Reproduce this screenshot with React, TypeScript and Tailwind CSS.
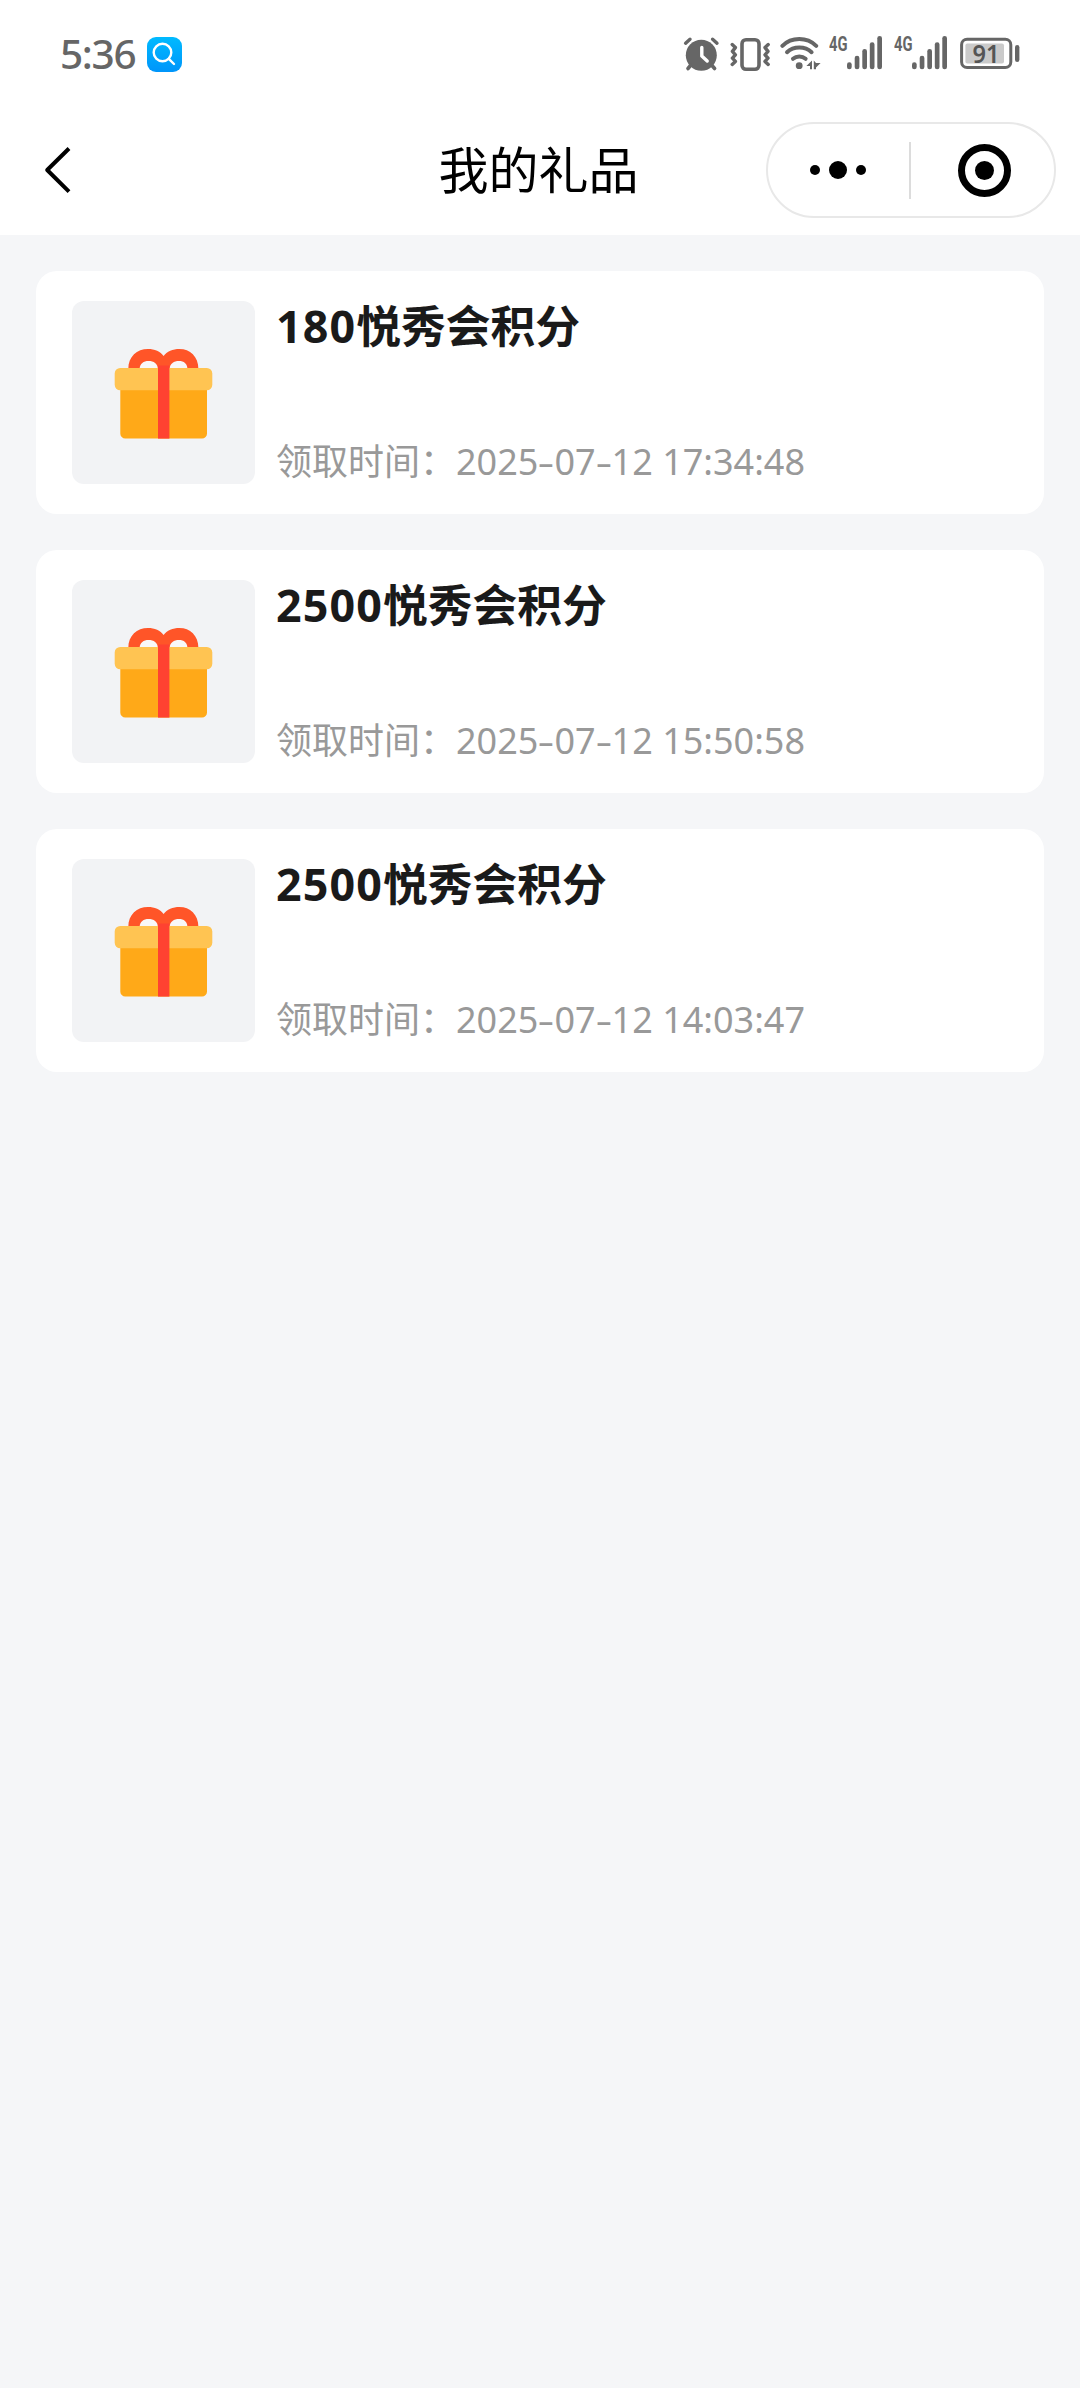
import type { ReactNode } from 'react'

const gifts = [
  { id: 1, points: '180', date: '2025-07-12', time: '17:34:48' },
  { id: 2, points: '2500', date: '2025-07-12', time: '15:50:58' },
  { id: 3, points: '2500', date: '2025-07-12', time: '14:03:47' },
]

const GRAY = '#666666'

function AlarmIcon() {
  return (
    <svg width="37" height="36" viewBox="0 0 37 36" fill="none" className="shrink-0">
      <circle cx="18.3" cy="19.3" r="15.5" fill={GRAY} />
      <path d="M2.6 7.2 L7 3.2 M34 7.2 L29.6 3.2" stroke={GRAY} strokeWidth="3.4" strokeLinecap="round" />
      <path d="M7.5 29.5 L5 32.5 M29 29.5 L31.6 32.5" stroke={GRAY} strokeWidth="3.6" strokeLinecap="round" />
      <path d="M18.8 11.5 V20 L24.2 25" stroke="#fff" strokeWidth="3.4" strokeLinecap="round" strokeLinejoin="round" />
    </svg>
  )
}

function VibrateIcon() {
  return (
    <svg width="40" height="36" viewBox="0 0 40 36" fill="none" className="shrink-0">
      <rect x="12" y="3.7" width="17" height="29.6" rx="4" stroke={GRAY} strokeWidth="3.6" />
      <path d="M2.2 8.6 L5.4 11.6 L2.4 15.4 L5.4 18.8 L2.4 22.2 L5.4 25.4 L2.2 28.4" stroke={GRAY} strokeWidth="3.4" strokeLinecap="round" strokeLinejoin="round" />
      <path d="M38.2 8.6 L35 11.6 L38 15.4 L35 18.8 L38 22.2 L35 25.4 L38.2 28.4" stroke={GRAY} strokeWidth="3.4" strokeLinecap="round" strokeLinejoin="round" />
    </svg>
  )
}

function WifiIcon() {
  return (
    <svg width="41" height="36" viewBox="0 0 41 36" fill="none" className="shrink-0">
      <path d="M2.4 9.8 C11.5 0.7 27 0.7 36.2 9.8" stroke={GRAY} strokeWidth="4" strokeLinecap="round" />
      <path d="M7 16.2 C13.6 9.9 25 9.9 31.6 16.2" stroke={GRAY} strokeWidth="4" strokeLinecap="round" />
      <path d="M13 22.8 C16.6 19.6 22 19.6 25.6 22.8" stroke={GRAY} strokeWidth="4" strokeLinecap="round" />
      <circle cx="19.2" cy="29.7" r="3.4" fill={GRAY} />
      <path d="M32 24.6 V33.2 H30 V30 H26.4 Z" fill={GRAY} />
      <path d="M33.8 24.6 L36 27 H40.6 L36 31.4 V33.2 H33.8 Z" fill={GRAY} />
    </svg>
  )
}

function SignalIcon() {
  return (
    <svg width="54" height="48" viewBox="0 -6 54 48" className="shrink-0">
      <text x="0" y="15" fontFamily="Roboto" fontWeight="700" fontSize="20" fill={GRAY} textLength="18.5" lengthAdjust="spacingAndGlyphs">4G</text>
      <rect x="18" y="26.3" width="4.7" height="7" rx="2.3" fill={GRAY} />
      <rect x="25.7" y="19.7" width="4.7" height="13.6" rx="2.3" fill={GRAY} />
      <rect x="33.3" y="13" width="4.7" height="20.3" rx="2.3" fill={GRAY} />
      <rect x="40.8" y="6.2" width="4.7" height="27.1" rx="2.3" fill={GRAY} />
      <rect x="48.3" y="0" width="4.7" height="33.3" rx="2.3" fill={GRAY} />
    </svg>
  )
}

function BatteryIcon() {
  return (
    <svg width="60" height="36" viewBox="0 0 60 36" fill="none" className="shrink-0">
      <rect x="1.6" y="3.3" width="49.2" height="28.2" rx="5.5" stroke={GRAY} strokeWidth="3" />
      <rect x="5.4" y="7.4" width="38.6" height="20" rx="2" fill="#cacaca" />
      <rect x="55" y="9" width="4.4" height="17" rx="2.2" fill={GRAY} />
      <text x="26" y="27" textAnchor="middle" fontFamily="Noto Sans" fontWeight="600" fontSize="26" fill="#555" textLength="27" lengthAdjust="spacingAndGlyphs">91</text>
    </svg>
  )
}

function SearchBadge() {
  return (
    <span className="flex h-[35px] w-[35px] rounded-[9px] bg-linear-to-b from-[#00baff] to-[#0095fa]">
      <svg width="35" height="35" viewBox="0 0 35 35" fill="none" stroke="#fff" strokeWidth="2.4" strokeLinecap="round">
        <circle cx="15.5" cy="15.5" r="8.8" />
        <path d="M21.8 21.8 L27 27" />
      </svg>
    </span>
  )
}

function GiftIcon() {
  return (
    <svg width="183" height="183" viewBox="0 0 183 183">
      <path d="M56.3 68 C56.3 55.5 65 48 76 48 C82.5 48 88.5 50.5 91.6 55 C94.7 50.5 101 48 107.4 48 C118 48 126.4 55.5 126.4 68 Z" fill="#ff5528" />
      <path d="M67.6 67.5 C68 62.5 71.5 60 76.5 60 C82 60 85.4 62.5 85.8 67.5 Z" fill="#f8f8f8" />
      <path d="M97.6 67.5 C98 62.5 101.8 60 107 60 C112 60 115 62.5 115.4 67.5 Z" fill="#f8f8f8" />
      <path d="M48.3 84 H135 V132.5 A5 5 0 0 1 130 137.6 H53.3 A5 5 0 0 1 48.3 132.5 Z" fill="#ffa918" />
      <rect x="42.7" y="67" width="97.6" height="22.3" rx="5.5" fill="#ffc452" />
      <rect x="86" y="64.5" width="11.4" height="73.1" fill="#ff4231" />
    </svg>
  )
}

function StatusBar() {
  return (
    <div className="flex h-[106px] items-center justify-between pt-0.5 pr-[60px] pl-[60px]">
      <div className="flex items-center">
        <span className="w-[87px] font-['Noto_Sans'] text-[40.5px] leading-none font-medium tracking-[-1.3px] text-[#666]">5:36</span>
        <SearchBadge />
      </div>
      <div className="flex items-center">
        <AlarmIcon />
        <span className="ml-[10px] flex"><VibrateIcon /></span>
        <span className="ml-[10px] flex"><WifiIcon /></span>
        <span className="ml-[8px] flex"><SignalIcon /></span>
        <span className="ml-[11px] flex"><SignalIcon /></span>
        <span className="ml-[12px] flex"><BatteryIcon /></span>
      </div>
    </div>
  )
}

function NavBar() {
  return (
    <div className="grid h-[129px] grid-cols-3 items-center pr-6 pb-px pl-[42px]">
      <svg width="30" height="50" viewBox="0 0 30 50" fill="none" stroke="#000" strokeWidth="4" strokeLinejoin="round">
        <path d="M27 3.5 L5.2 25 L27 46.7" />
      </svg>
      <h1 className="-ml-[21px] text-center text-[50px] leading-none font-normal whitespace-nowrap text-black">我的礼品</h1>
      <div className="flex h-24 w-[290px] items-center justify-self-end rounded-full border-2 border-[#e8e8e8]">
        <div className="flex flex-1 items-center justify-center gap-[9px] pr-[2px]">
          <span className="size-[10px] rounded-full bg-black" />
          <span className="size-[18px] rounded-full bg-black" />
          <span className="size-[10px] rounded-full bg-black" />
        </div>
        <div className="h-[57px] w-[2px] bg-[#dcdcdc]" />
        <div className="flex flex-1 items-center justify-center pl-1">
          <span className="flex size-[53px] items-center justify-center rounded-full border-[7px] border-black">
            <span className="size-[19px] rounded-full bg-black" />
          </span>
        </div>
      </div>
    </div>
  )
}

// the dash is wider than the font's own hyphen
function Dash({ children }: { children: ReactNode }) {
  return <span className="inline-block w-[16px] origin-center scale-x-145 text-center">{children}</span>
}

function GiftCard({ points, date, time }: { points: string; date: string; time: string }) {
  const [year, month, day] = date.split('-')
  return (
    <li className="flex h-[243px] rounded-[21px] bg-white px-9 py-[30px]">
      <div className="size-[183px] shrink-0 overflow-hidden rounded-[12px] bg-[#f2f3f5]">
        <GiftIcon />
      </div>
      <div className="ml-[21px] flex flex-col justify-between">
        <h2 className="-mt-px text-[44.8px] leading-[52px] font-bold whitespace-nowrap text-[#1a1a1a]">
          <span className="tracking-[1.1px]">{points}</span>悦秀会积分
        </h2>
        <p className="flex text-[36px] leading-[44px] whitespace-pre text-[#999]">
          <span>领取时间：</span>
          <span>
            {year}<Dash>-</Dash>{month}<Dash>-</Dash>{day} {time}
          </span>
        </p>
      </div>
    </li>
  )
}

export default function App() {
  return (
    <div className="min-h-[2388px] w-[1080px] bg-[#f5f6f8] font-['Noto_Sans','Noto_Sans_CJK_SC',sans-serif]">
      <header className="bg-white">
        <StatusBar />
        <NavBar />
      </header>
      <ul className="flex flex-col gap-9 p-9">
        {gifts.map((gift) => (
          <GiftCard key={gift.id} points={gift.points} date={gift.date} time={gift.time} />
        ))}
      </ul>
    </div>
  )
}
